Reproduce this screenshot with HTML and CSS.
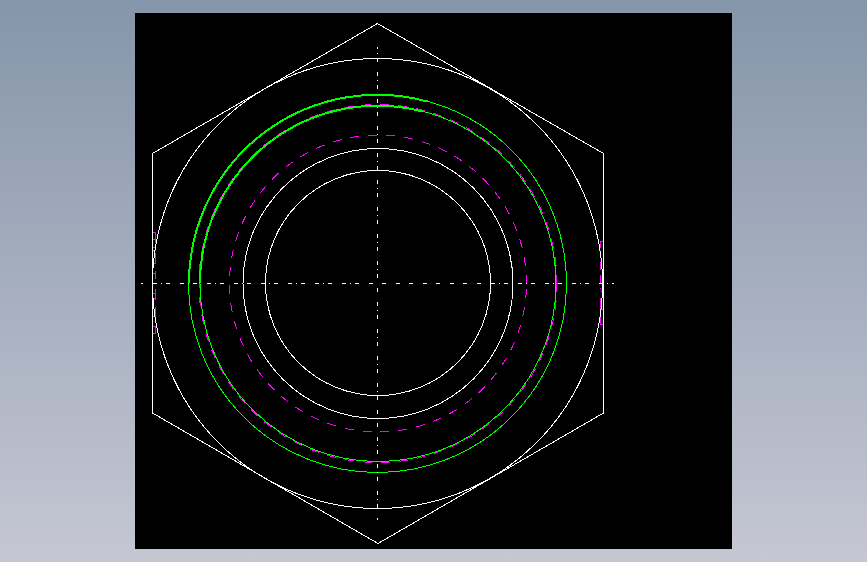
FILE: index.html
```
<!DOCTYPE html>
<html lang="en">
<head>
  <meta charset="UTF-8">
  <meta name="viewport" content="width=device-width, initial-scale=1">
  <title>Hex Nut - Top View</title>
  <link rel="stylesheet" href="styles.css">
</head>
<body>

  <main class="viewer">
    <svg class="drawing" viewBox="0 0 597 536" role="img" aria-label="Top view of a hex nut">
      <!-- origin is the centre of the nut -->
      <g transform="translate(242.5 270.5)">

        <!-- hidden edges -->
        <g class="hidden-line">
          <path class="dashed" d="M149 0 A148.5 148.5 0 0 0 -148 0 A148.5 148.5 0 0 0 149 0" />
          <path class="dashed" d="M179.5 0 A179 179 0 0 0 -178.5 0 A179 179 0 0 0 179.5 0" />
          <path d="M-225 -51 H-222 V-41 M-225 -44 H-222 M-225 -36 H-222 M-225 -33 H-222 M-222 -31 V-20 H-225 M-222 -13 V-5 M-225 -10 H-222 M-222 5 V16 M-225 10 H-222 M-225 15 H-222 M-222 23 V33 H-225 M-225 43 H-222 V50 H-225" />
          <path d="M225 -42 H223 V-36 M223 -22 V-14 M223 -9 V0 M223 4 V5 M225 8 H223 M223 14 V26 H225 M223 33 V41 H225" />
        </g>

        <!-- outline, chamfer and bore -->
        <g class="edge">
          <path d="M0 -260 L226 -130 V129.5 L0.5 260 L-225 129.5 V-130 Z" />
          <circle r="225" />
          <circle cx="0.5" r="135" />
          <circle cx="0.5" cy="-0.5" r="112.5" />
        </g>

        <!-- thread -->
        <g class="thread">
          <circle r="189" />
          <circle cx="0.5" r="178" />
          <path class="heavy" d="M-188.5 0 A188.5 188.5 0 0 1 50 -182" />
          <path class="heavy" d="M-177.5 0 A177.5 177.5 0 0 1 45 -172" />
        </g>

        <!-- centre lines -->
        <g class="centre-line">
          <path class="dash-dot across" d="M-236.5 0 H-4" />
          <path class="short-dash" d="M4.5 0 H109" />
          <path class="dash-dot" d="M113.5 0 H236.5" />
          <path class="dash-dot upper" d="M0 -236.5 V-5" />
          <path class="dash-dot lower" d="M0 4.5 V236.5" />
        </g>
      </g>
    </svg>
  </main>

</body>
</html>
```
FILE: styles.css
```
body {
  margin: 0;
  min-height: 100vh;
  background: linear-gradient(#8595aa, #c5c7d3);
}

.viewer {
  padding: 13px 135px;
}

.drawing {
  display: block;
  width: 100%;
  background: #000;
  fill: none;
  stroke-width: 1;
  shape-rendering: crispEdges;
}

.hidden-line {
  stroke: #f0f;
}

.dashed {
  stroke-dasharray: 9 9;
}

.edge,
.centre-line {
  stroke: #fff;
}

.thread {
  stroke: #0f0;
}

.heavy {
  stroke-width: 2;
}

.short-dash {
  stroke-dasharray: 4 10 4 9;
}

.dash-dot {
  stroke-dasharray: 4 4 1 4 4 10;
}

/* start part way through the pattern */
.across {
  stroke-dashoffset: 15;
}

.upper {
  stroke-dashoffset: 2;
}

.lower {
  stroke-dashoffset: 13;
}
```
